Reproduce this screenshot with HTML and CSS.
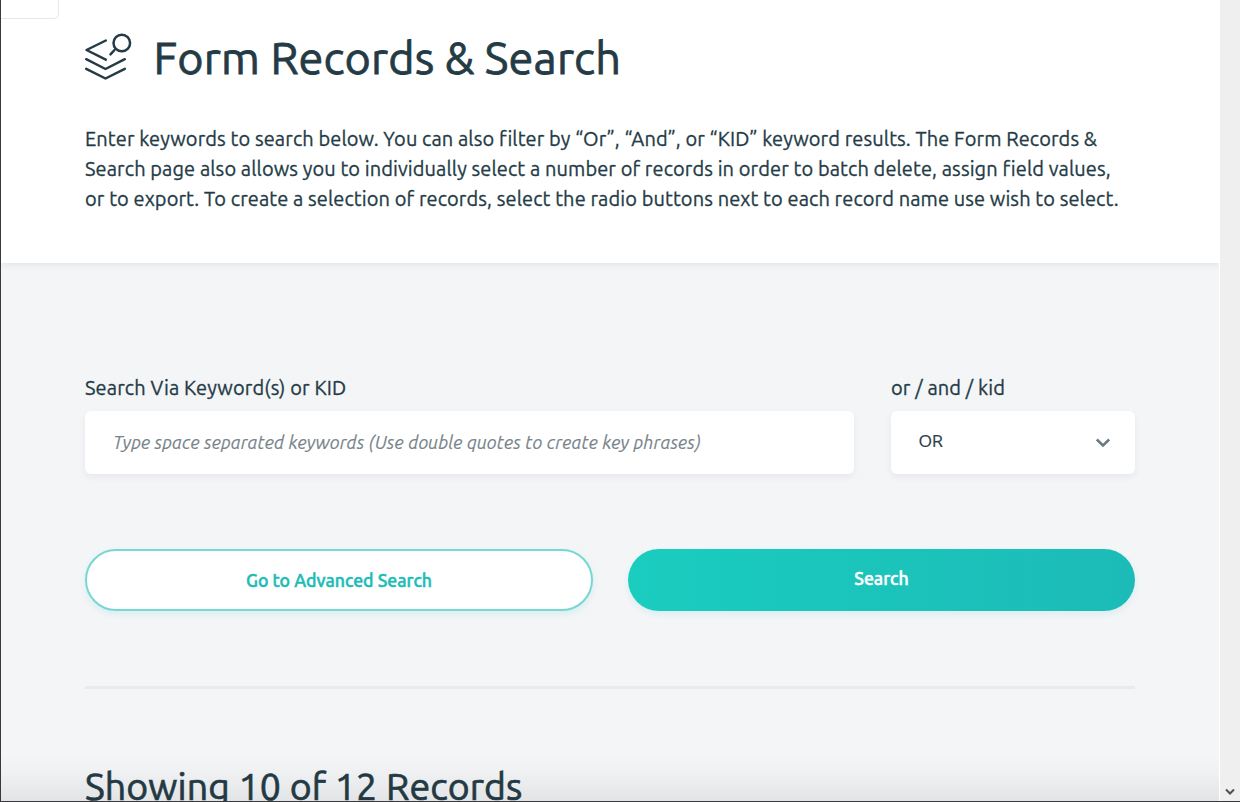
FILE: index.html
```html
<!DOCTYPE html>
<html lang="en">
<head>
<meta charset="utf-8">
<title>Form Records &amp; Search</title>
<link rel="stylesheet" href="styles.css">
</head>
<body>
<div class="window">
  <main class="page">
    <header class="head">
      <div class="tab"></div>
      <div class="title-row">
        <svg class="title-icon" width="48" height="48" viewBox="0 0 48 48" fill="none" stroke="#243b46" stroke-width="2.5" stroke-linecap="round" stroke-linejoin="round">
          <path d="M20.8 6.5 1.5 16l19.300 9.700M1.200 25.200 20.500 35 39.800 25.200M1.200 34.800 20.500 44.500 39.800 34.800M25.500 20.400 29.500 16"/>
          <circle cx="36.800" cy="9" r="8.300"/>
        </svg>
        <h1 class="title">Form Records &amp; Search</h1>
      </div>
      <p class="intro">
        <span class="line">Enter keywords to search below. You can also filter by “Or”, “And”, or “KID” keyword results. The Form Records &amp;</span>
        <span class="line">Search page also allows you to individually select a number of records in order to batch delete, assign field values,</span>
        <span class="line">or to export. To create a selection of records, select the radio buttons next to each record name use wish to select.</span>
      </p>
    </header>
    <section class="body">
      <div class="fields">
        <div class="field">
          <label class="label">Search Via Keyword(s) or KID</label>
          <div class="box"><span class="placeholder">Type space separated keywords (Use double quotes to create key phrases)</span></div>
        </div>
        <div class="field">
          <label class="label">or / and / kid</label>
          <div class="box select"><span class="value">OR</span>
            <svg width="16" height="10" viewBox="0 0 16 10" fill="none" stroke="#6c7a82" stroke-width="2.600"><path d="M1.800 1.500 8 7.500 14.200 1.500"/></svg>
          </div>
        </div>
      </div>
      <div class="buttons">
        <div class="btn outline"><span>Go to Advanced Search</span></div>
        <div class="btn solid"><span>Search</span></div>
      </div>
      <div class="rule"></div>
      <h2 class="count">Showing 10 of 12 Records</h2>
    </section>
    <div class="fade"></div>
  </main>
  <aside class="scrollbar">
    <svg width="10" height="8" viewBox="0 0 10 8" fill="none" stroke="#505050" stroke-width="2"><path d="M1 1.500 5 5.500 9 1.500"/></svg>
  </aside>
</div>
</body>
</html>
```
FILE: styles.css
```css
* { box-sizing: border-box; }
body { margin: 0; font-family: Ubuntu, "Noto Sans", sans-serif; color: #243b46; }
h1, h2, p { margin: 0; font-weight: 400; }
.window { display: flex; height: 802px; overflow: hidden; border-left: 1px solid #3a3a3e; border-bottom: 1px solid #3a3a3e; }
.page { position: relative; width: 1219px; flex: none; background: #f4f5f7; border-right: 1px solid #fff; overflow: hidden; }
.scrollbar { flex: 1; background: #efefef; display: flex; align-items: flex-end; justify-content: center; padding: 0 1px 5px 0; }
.head { position: relative; height: 263px; background: #fff; padding: 34px 84px 0; margin-right: -1px; box-shadow: 0 2px 7px rgba(20, 40, 50, .08); }
.tab { position: absolute; left: -1px; top: -1px; width: 59px; height: 20px; border: 1px solid #e7e7e7; border-radius: 0 0 5px 0; }
.title-row { display: flex; height: 48px; align-items: center; }
.title-icon { flex: none; overflow: visible; }
.title { margin-left: 20.500px; font-size: 45px; line-height: 48px; letter-spacing: .16px; -webkit-text-stroke: .8px; white-space: nowrap; }
.intro { margin-top: 42px; font-size: 20px; line-height: 30px; letter-spacing: .095px; -webkit-text-stroke: .3px; }
.line { display: block; width: max-content; white-space: nowrap; }
.body { padding: 110px 84px 0; }
.fields { display: grid; grid-template-columns: 769px 244px; gap: 37px; }
.label { display: block; height: 38px; font-size: 20px; line-height: 30px; letter-spacing: .12px; -webkit-text-stroke: .3px; white-space: nowrap; }
.box { display: flex; align-items: center; justify-content: space-between; height: 63px; padding: 0 24px 0 28px; background: #fff; border-radius: 6px; box-shadow: 0 3px 7px rgba(20, 40, 50, .06); white-space: nowrap; }
.placeholder { margin-top: -2px; font-size: 18px; letter-spacing: .175px; font-style: italic; color: #78848a; -webkit-text-stroke: .15px; }
.value { font-size: 17.500px; margin: -4px 0 0 -.5px; -webkit-text-stroke: .2px; }
.buttons { display: grid; grid-template-columns: 508px 507px; gap: 35px; margin-top: 75px; }
.btn { display: flex; height: 62px; align-items: center; justify-content: center; border-radius: 31px; font-size: 17.700px; font-weight: 500; -webkit-text-stroke: .5px; white-space: nowrap; box-shadow: 0 3px 7px rgba(27, 188, 180, .12); }
.outline { background: #fff; border: 2px solid #76d7d3; color: #1cbcb6; padding-top: 1px; }
.solid { background: linear-gradient(90deg, #1acdbf, #1cbbb7); color: #fff; padding-bottom: 4px; }
.rule { height: 3px; margin-top: 75px; background: #e8eaec; }
.count { margin-top: 73px; font-size: 37.500px; line-height: 48px; letter-spacing: .1px; -webkit-text-stroke: .7px; white-space: nowrap; width: max-content; }
.fade { position: absolute; left: 0; right: 0; bottom: 0; height: 46px; background: linear-gradient(rgba(0, 0, 0, 0), rgba(0, 0, 0, .02) 40%, rgba(0, 0, 0, .07)); }
```
